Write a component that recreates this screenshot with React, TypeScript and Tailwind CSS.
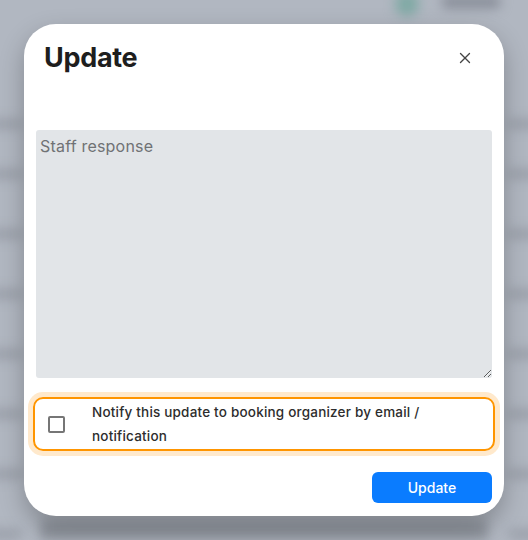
import { X } from 'lucide-react'

const rows = [60, 110, 170, 230, 290, 350, 410, 470]

export default function App() {
  return (
    <div className="relative w-[528px] h-[540px] overflow-hidden bg-[#b1b7c1] font-['Inter','Liberation_Sans',sans-serif]">
      {/* blurred page behind the dialog */}
      <div className="absolute inset-0 blur-[6px]">
        <div className="absolute left-[395px] top-[-8px] w-[24px] h-[24px] rounded-full bg-[#7fa9a4]" />
        <div className="absolute left-[442px] top-[-4px] w-[58px] h-[12px] rounded bg-[#868b96]" />
        {rows.map(y => (
          <div key={y} className="absolute left-0 w-full h-[10px]" style={{ top: y + 60 }}>
            <div className="absolute left-[-10px] w-[32px] h-[8px] rounded bg-[#9499a3]" />
            <div className="absolute right-[-10px] w-[30px] h-[8px] rounded bg-[#9499a3]" />
          </div>
        ))}
        <div className="absolute left-[40px] right-[40px] top-[520px] h-[20px] bg-[#8e939c]" />
      </div>

      <div className="relative mx-[24px] mt-[24px] h-[492px] rounded-[32px] bg-white shadow-[0_10px_24px_rgba(0,0,0,0.25)] flex flex-col">
        <div className="flex items-center justify-between pl-[20px] pr-[30px] pt-[18px]">
          <h2 className="text-[27px] leading-[32px] font-bold text-[#1e1e1e] tracking-[-0.3px]">Update</h2>
          <button type="button" aria-label="Close" className="text-[#444]">
            <X size={18} strokeWidth={1.8} />
          </button>
        </div>

        <div className="px-[12px] mt-[56px]">
          <textarea
            placeholder="Staff response"
            className="block w-full h-[248px] rounded-[3px] bg-[#e2e5e8] px-[4px] py-[4px] text-[16px] leading-[24px] tracking-[0.2px] text-[#333] placeholder:text-[#707274] outline-none"
          />
        </div>

        <div className="px-[9px] mt-[19px]">
          <label className="flex items-center rounded-[10px] border-2 border-[#ff9500] shadow-[0_0_0_5px_#ffe9cc] py-[1px] pl-[13px] pr-[16px]">
            <span className="w-[17px] h-[17px] shrink-0 rounded-[2px] border-2 border-[#767676] bg-white" />
            <span className="ml-[27px] max-w-[345px] text-[13.5px] leading-[24px] font-medium tracking-[0.2px] text-[#2d2d2d]">
              Notify this update to booking organizer by email / notification
            </span>
          </label>
        </div>

        <div className="flex justify-end px-[12px] mt-[21px]">
          <button
            type="button"
            className="w-[120px] h-[31px] rounded-[6px] bg-[#0a7cff] text-white text-[14px] font-medium"
          >
            Update
          </button>
        </div>
      </div>
    </div>
  )
}
